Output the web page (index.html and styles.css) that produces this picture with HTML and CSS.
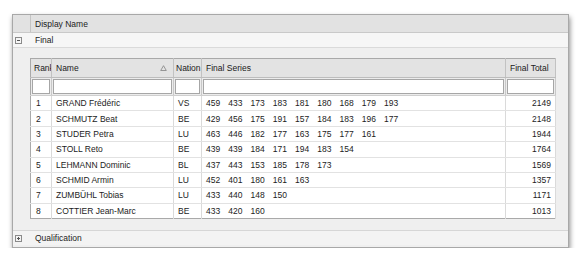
FILE: index.html
```html
<!DOCTYPE html>
<html>
<head>
<meta charset="utf-8">
<link rel="stylesheet" href="styles.css">
</head>
<body>
<div class="page">
  <div class="panel">
    <div class="colhead">
      <div class="indent"></div>
      <div class="colhead-label">Display Name</div>
    </div>
    <div class="group group-open">
      <div class="toggle">
        <svg width="7" height="7" viewBox="0 0 7 7"><rect x="0.5" y="0.5" width="6" height="6" fill="none" stroke="#8a8a8a"/><line x1="2" y1="3.5" x2="5" y2="3.5" stroke="#555"/></svg>
      </div>
      <div class="group-label">Final</div>
    </div>
    <div class="group-body">
      <table class="grid">
        <colgroup>
          <col class="c-rank"><col class="c-name"><col class="c-nation"><col class="c-series"><col class="c-total">
        </colgroup>
        <thead>
          <tr class="hdr">
            <th>Rank</th>
            <th><div class="sortcell"><span>Name</span><svg width="7" height="6" viewBox="0 0 7 6"><polygon points="3.5,0.7 6.3,5.5 0.7,5.5" fill="none" stroke="#8c8c8c" stroke-width="0.9"/></svg></div></th>
            <th>Nation</th>
            <th>Final Series</th>
            <th>Final Total</th>
          </tr>
          <tr class="filters">
            <td><div class="filter"></div></td>
            <td><div class="filter"></div></td>
            <td><div class="filter"></div></td>
            <td><div class="filter"></div></td>
            <td><div class="filter"></div></td>
          </tr>
        </thead>
        <tbody>
          <tr><td>1</td><td>GRAND Frédéric</td><td>VS</td><td class="series"><span>459</span><span>433</span><span>173</span><span>183</span><span>181</span><span>180</span><span>168</span><span>179</span><span>193</span></td><td class="total">2149</td></tr>
          <tr><td>2</td><td>SCHMUTZ Beat</td><td>BE</td><td class="series"><span>429</span><span>456</span><span>175</span><span>191</span><span>157</span><span>184</span><span>183</span><span>196</span><span>177</span></td><td class="total">2148</td></tr>
          <tr><td>3</td><td>STUDER Petra</td><td>LU</td><td class="series"><span>463</span><span>446</span><span>182</span><span>177</span><span>163</span><span>175</span><span>177</span><span>161</span></td><td class="total">1944</td></tr>
          <tr><td>4</td><td>STOLL Reto</td><td>BE</td><td class="series"><span>439</span><span>439</span><span>184</span><span>171</span><span>194</span><span>183</span><span>154</span></td><td class="total">1764</td></tr>
          <tr><td>5</td><td>LEHMANN Dominic</td><td>BL</td><td class="series"><span>437</span><span>443</span><span>153</span><span>185</span><span>178</span><span>173</span></td><td class="total">1569</td></tr>
          <tr><td>6</td><td>SCHMID Armin</td><td>LU</td><td class="series"><span>452</span><span>401</span><span>180</span><span>161</span><span>163</span></td><td class="total">1357</td></tr>
          <tr><td>7</td><td>ZUMBÜHL Tobias</td><td>LU</td><td class="series"><span>433</span><span>440</span><span>148</span><span>150</span></td><td class="total">1171</td></tr>
          <tr><td>8</td><td>COTTIER Jean-Marc</td><td>BE</td><td class="series"><span>433</span><span>420</span><span>160</span></td><td class="total">1013</td></tr>
        </tbody>
      </table>
    </div>
    <div class="group group-closed">
      <div class="toggle">
        <svg width="7" height="7" viewBox="0 0 7 7"><rect x="0.5" y="0.5" width="6" height="6" fill="none" stroke="#8a8a8a"/><line x1="2" y1="3.5" x2="5" y2="3.5" stroke="#555"/><line x1="3.5" y1="2" x2="3.5" y2="5" stroke="#555"/></svg>
      </div>
      <div class="group-label">Qualification</div>
    </div>
  </div>
</div>
</body>
</html>
```
FILE: styles.css
```css
* { box-sizing: border-box; }
html, body { margin: 0; padding: 0; background: #ffffff; }
body {
  font-family: "Liberation Sans", Arial, sans-serif;
  font-size: 8.5px;
  color: #1c1c1c;
}
.page {
  padding: 14px 16px 0 12px;
}
.panel {
  width: 557px;
  border: 1px solid #a8a8a8;
  background: #efefef;
  box-shadow: 1px 3px 5px rgba(0, 0, 0, 0.45);
  padding-bottom: 2px;
}
.colhead {
  display: flex;
  height: 18px;
  background: #e2e2e2;
  border-bottom: 1px solid #c9c9c9;
}
.indent {
  width: 18px;
  border-right: 1px solid #c4c4c4;
}
.colhead-label {
  display: flex;
  align-items: center;
  padding-left: 4px;
  font-size: 8.5px;
}
.group {
  display: flex;
  align-items: center;
  height: 15px;
  background: #f6f6f6;
}
.group-open {
  border-bottom: 1px solid #dadada;
}
.group-closed {
  border-top: 1px solid #d6d6d6;
  background: #f3f3f3;
}
.toggle {
  width: 18px;
  display: flex;
  align-items: center;
  padding-left: 2px;
}
.toggle svg { display: block; }
.group-label {
  padding-left: 4px;
}
.group-body {
  padding: 10px 13px 11px 17px;
  background: #efefef;
}
.grid {
  width: 525px;
  table-layout: fixed;
  border-collapse: collapse;
  border: 1px solid #a9a9a9;
  background: #ffffff;
}
.c-rank { width: 21px; }
.c-name { width: 122px; }
.c-nation { width: 28px; }
.c-series { width: 304px; }
.c-total { width: 50px; }
.grid th, .grid td {
  padding: 0 0 0 4px;
  white-space: nowrap;
  overflow: hidden;
  text-align: left;
  font-weight: normal;
}
.hdr th {
  height: 19px;
  background: #e3e3e3;
  border-right: 1px solid #c2c2c2;
  border-bottom: 1px solid #bdbdbd;
  color: #202020;
}
.hdr th:first-child { padding-left: 3px; }
.hdr th:nth-child(3) { padding-left: 2px; }
.sortcell {
  display: flex;
  align-items: center;
  justify-content: space-between;
  padding-right: 6px;
}
.sortcell svg { display: block; }
.filters td {
  height: 17px;
  padding: 1px;
  background: #ececec;
  border-right: 1px solid #c8c8c8;
  border-bottom: 1px solid #cfcfcf;
}
.filter {
  height: 15px;
  background: #ffffff;
  border: 1px solid #a6a6a6;
}
tbody td {
  height: 15.375px;
  border-bottom: 1px solid #e2e2e2;
  border-right: 1px solid #dadada;
}
tbody td:first-child { padding-left: 5px; }
tbody tr:last-child td { border-bottom: none; }
.series span {
  display: inline-block;
  width: 22.25px;
}
.grid td.total {
  text-align: right;
  padding-right: 4px;
}
```
